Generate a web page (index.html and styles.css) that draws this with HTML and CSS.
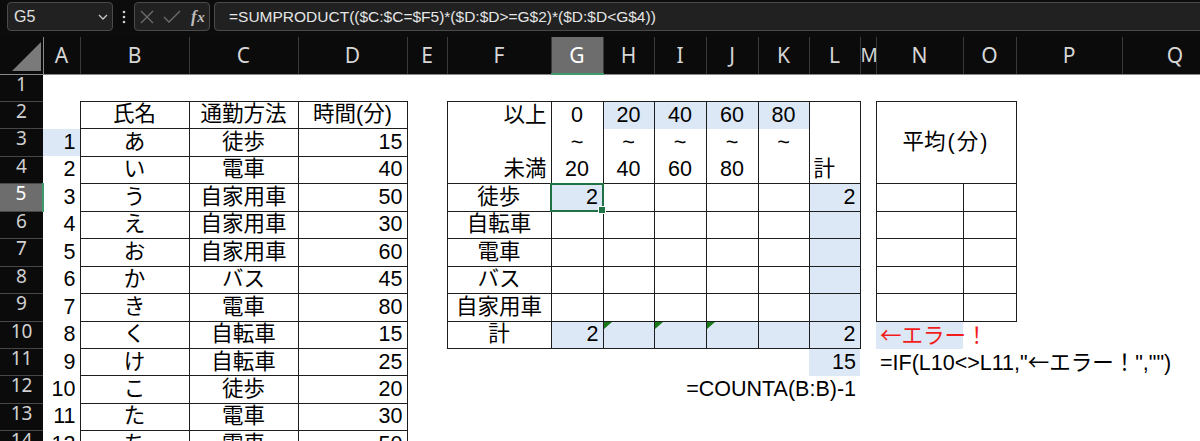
FILE: index.html
```html
<!DOCTYPE html>
<html lang="ja">
<head>
<meta charset="utf-8">
<title>通勤方法の集計</title>
<link rel="stylesheet" href="styles.css">
</head>
<body>
<div class="app">
  <div class="formula-bar">
    <div class="name-box">
      <span>G5</span>
      <svg class="chevron" width="10" height="6" viewBox="0 0 10 6"><path d="M1 1 L5 5 L9 1" fill="none" stroke="#c8c8c8" stroke-width="1.3"/></svg>
    </div>
    <div class="grip">
      <svg width="4" height="14" viewBox="0 0 4 14"><circle cx="2" cy="2" r="1.3" fill="#d0d0d0"/><circle cx="2" cy="7" r="1.3" fill="#d0d0d0"/><circle cx="2" cy="12" r="1.3" fill="#d0d0d0"/></svg>
    </div>
    <div class="fx-box">
      <svg class="ico-cancel" width="14" height="14" viewBox="0 0 14 14"><path d="M1 1 L13 13 M13 1 L1 13" stroke="#6e6e6e" stroke-width="1.3" fill="none"/></svg>
      <svg class="ico-enter" width="18" height="14" viewBox="0 0 18 14"><path d="M1 7 L6 12 L17 1" stroke="#6e6e6e" stroke-width="1.3" fill="none"/></svg>
      <span class="fx">f<i>x</i></span>
    </div>
    <div class="formula">=SUMPRODUCT(($C:$C=$F5)*($D:$D&gt;=G$2)*($D:$D&lt;G$4))</div>
  </div>

  <div class="sheet">
    <table class="grid">
      <colgroup>
        <col class="w-hd"><col class="w-a"><col class="w-b"><col class="w-b"><col class="w-b"><col class="w-e">
        <col class="w-f"><col class="w-n52"><col class="w-n51"><col class="w-n52"><col class="w-n52"><col class="w-n51"><col class="w-n51">
        <col class="w-m"><col class="w-nn"><col class="w-o"><col class="w-p"><col class="w-p">
      </colgroup>
      <thead>
        <tr class="cols">
          <th class="corner"><svg width="30" height="30" viewBox="0 0 30 30"><path d="M29 0 L29 29 L0 29 Z" fill="#7a7a7a"/></svg></th>
          <th>A</th><th>B</th><th>C</th><th>D</th><th>E</th><th>F</th>
          <th class="sel">G</th><th>H</th><th>I</th><th>J</th><th>K</th><th>L</th>
          <th class="narrow">M</th><th>N</th><th>O</th><th>P</th><th>Q</th>
        </tr>
      </thead>
      <tbody>
        <tr>
          <th>1</th><td colspan="17"></td>
        </tr>
        <tr>
          <th>2</th><td></td>
          <td class="box c">氏名</td><td class="box c">通勤方法</td><td class="box c">時間(分)</td>
          <td></td>
          <td class="bt bl br r">以上</td>
          <td class="bt br c">0</td><td class="bt br c hl">20</td><td class="bt br c hl">40</td><td class="bt br c hl">60</td><td class="bt br c hl">80</td>
          <td class="bt br"></td>
          <td></td>
          <td class="box c avg" colspan="2" rowspan="3">平均<span class="paren">(</span>分<span class="paren">)</span></td>
          <td></td><td></td>
        </tr>
        <tr>
          <th>3</th><td class="r hl">1</td>
          <td class="box c">あ</td><td class="box c">徒歩</td><td class="box r">15</td>
          <td></td>
          <td class="bl br"></td>
          <td class="br c">~</td><td class="br c">~</td><td class="br c">~</td><td class="br c">~</td><td class="br c">~</td>
          <td class="br"></td>
          <td></td><td></td><td></td>
        </tr>
        <tr>
          <th>4</th><td class="r">2</td>
          <td class="box c">い</td><td class="box c">電車</td><td class="box r">40</td>
          <td></td>
          <td class="bl br bb r">未満</td>
          <td class="br bb c">20</td><td class="br bb c">40</td><td class="br bb c">60</td><td class="br bb c">80</td><td class="br bb"></td>
          <td class="br bb">計</td>
          <td></td><td></td><td></td>
        </tr>
        <tr>
          <th class="sel">5</th><td class="r">3</td>
          <td class="box c">う</td><td class="box c">自家用車</td><td class="box r">50</td>
          <td></td>
          <td class="box c">徒歩</td>
          <td class="box r hl active">2</td><td class="box"></td><td class="box"></td><td class="box"></td><td class="box"></td>
          <td class="box r hl">2</td>
          <td></td>
          <td class="box"></td><td class="box"></td>
          <td></td><td></td>
        </tr>
        <tr>
          <th>6</th><td class="r">4</td>
          <td class="box c">え</td><td class="box c">自家用車</td><td class="box r">30</td>
          <td></td>
          <td class="box c">自転車</td>
          <td class="box"></td><td class="box"></td><td class="box"></td><td class="box"></td><td class="box"></td>
          <td class="box hl"></td>
          <td></td>
          <td class="box"></td><td class="box"></td>
          <td></td><td></td>
        </tr>
        <tr>
          <th>7</th><td class="r">5</td>
          <td class="box c">お</td><td class="box c">自家用車</td><td class="box r">60</td>
          <td></td>
          <td class="box c">電車</td>
          <td class="box"></td><td class="box"></td><td class="box"></td><td class="box"></td><td class="box"></td>
          <td class="box hl"></td>
          <td></td>
          <td class="box"></td><td class="box"></td>
          <td></td><td></td>
        </tr>
        <tr>
          <th>8</th><td class="r">6</td>
          <td class="box c">か</td><td class="box c">バス</td><td class="box r">45</td>
          <td></td>
          <td class="box c">バス</td>
          <td class="box"></td><td class="box"></td><td class="box"></td><td class="box"></td><td class="box"></td>
          <td class="box hl"></td>
          <td></td>
          <td class="box"></td><td class="box"></td>
          <td></td><td></td>
        </tr>
        <tr>
          <th>9</th><td class="r">7</td>
          <td class="box c">き</td><td class="box c">電車</td><td class="box r">80</td>
          <td></td>
          <td class="box c">自家用車</td>
          <td class="box"></td><td class="box"></td><td class="box"></td><td class="box"></td><td class="box"></td>
          <td class="box hl"></td>
          <td></td>
          <td class="box"></td><td class="box"></td>
          <td></td><td></td>
        </tr>
        <tr>
          <th>10</th><td class="r">8</td>
          <td class="box c">く</td><td class="box c">自転車</td><td class="box r">15</td>
          <td></td>
          <td class="box c">計</td>
          <td class="box r hl">2</td><td class="box hl flag"></td><td class="box hl flag"></td><td class="box hl flag"></td><td class="box hl"></td>
          <td class="box r hl">2</td>
          <td></td>
          <td class="hl err"><span class="cjk">←</span>エラー！</td><td></td>
          <td></td><td></td>
        </tr>
        <tr>
          <th>11</th><td class="r">9</td>
          <td class="box c">け</td><td class="box c">自転車</td><td class="box r">25</td>
          <td></td>
          <td></td><td></td><td></td><td></td><td></td><td></td>
          <td class="r hl">15</td>
          <td></td>
          <td colspan="4">=IF(L10&lt;&gt;L11,"<span class="cjk">←</span>エラー！","")</td>
        </tr>
        <tr>
          <th>12</th><td class="r">10</td>
          <td class="box c">こ</td><td class="box c">徒歩</td><td class="box r">20</td>
          <td></td>
          <td></td>
          <td class="r" colspan="6">=COUNTA(B:B)-1</td>
          <td></td><td></td><td></td><td></td><td></td>
        </tr>
        <tr>
          <th>13</th><td class="r">11</td>
          <td class="box c">た</td><td class="box c">電車</td><td class="box r">30</td>
          <td colspan="13"></td>
        </tr>
        <tr>
          <th>14</th><td class="r">12</td>
          <td class="box c">ち</td><td class="box c">電車</td><td class="box r">50</td>
          <td colspan="13"></td>
        </tr>
      </tbody>
    </table>
  </div>
</div>
</body>
</html>
```

FILE: styles.css
```css
* {
  box-sizing: border-box;
}

html,
body {
  margin: 0;
  background: #ffffff;
  overflow: hidden;
}

body {
  width: 1200px;
  height: 441px;
  font-family: "Liberation Sans", "Noto Sans CJK JP", sans-serif;
}

.app {
  display: flex;
  flex-direction: column;
  width: 1200px;
}

/* ---------- formula bar ---------- */
.formula-bar {
  display: flex;
  align-items: flex-start;
  height: 37px;
  padding: 2px 0 0 7px;
  background: #0c0c0c;
  overflow: hidden;
}

.name-box,
.fx-box,
.formula {
  height: 29px;
  border: 1px solid #4b4b4b;
  border-radius: 4px;
  background: #212121;
  display: flex;
  align-items: center;
}

.name-box {
  width: 106px;
  justify-content: space-between;
  padding: 0 4px 0 6px;
  color: #e2e2e2;
  font-size: 16px;
}

.chevron {
  display: block;
}

.grip {
  width: 21px;
  height: 29px;
  display: flex;
  align-items: center;
  justify-content: center;
}

.fx-box {
  width: 76px;
  padding-left: 5px;
}

.ico-cancel {
  margin-right: 9px;
}

.ico-enter {
  margin-right: 10px;
}

.fx {
  font-family: "Liberation Serif", serif;
  font-style: italic;
  font-weight: bold;
  font-size: 17px;
  color: #bdbdbd;
  letter-spacing: 0.5px;
}

.fx i {
  font-size: 15px;
}

.formula {
  flex: 1;
  margin-left: 4px;
  margin-right: -20px;
  padding-left: 14px;
  color: #e6e6e6;
  font-size: 15.5px;
  white-space: nowrap;
}

/* ---------- sheet grid ---------- */
.sheet {
  width: 1200px;
  overflow: hidden;
}

.grid {
  border-collapse: collapse;
  table-layout: fixed;
  width: 1228px;
}

.w-hd { width: 43px; }
.w-a { width: 37px; }
.w-b { width: 109px; }
.w-e { width: 40px; }
.w-f { width: 104px; }
.w-n52 { width: 52px; }
.w-n51 { width: 51px; }
.w-m { width: 16px; }
.w-nn { width: 87px; }
.w-o { width: 53px; }
.w-p { width: 106px; }

/* column headers */
.cols th {
  height: 37px;
  padding: 0;
  background: #0b0b0b;
  color: #d6d6d6;
  font: 400 21px "Noto Sans", sans-serif;
  text-align: center;
  vertical-align: middle;
  border-right: 1px solid #3a3a3a;
  border-bottom: 1px solid #8a8a8a;
  overflow: hidden;
}

.cols th.narrow {
  font-size: 19px;
}

.cols th.corner {
  text-align: left;
  border-right: 1px solid #8a8a8a;
}

.corner svg {
  display: block;
  margin: 4px 0 0 12px;
}

.cols th.sel {
  background: #6d6d6d;
  color: #ffffff;
  border-bottom: 2px solid #3f9b6b;
}

/* row headers */
tbody tr {
  height: 27.46px;
}

tbody th {
  padding: 0;
  background: #0b0b0b;
  color: #d0d0d0;
  font: 400 19px/18px "Noto Sans", sans-serif;
  text-align: center;
  vertical-align: top;
  border-bottom: 1px solid #474747;
}

tbody th.sel {
  background: #6d6d6d;
  color: #ffffff;
  border-right: 2px solid #3f9b6b;
}

/* cells */
.grid td {
  padding: 0 4px;
  font-size: 21.5px;
  line-height: 1;
  color: #000000;
  white-space: nowrap;
  overflow: visible;
  vertical-align: middle;
  text-align: left;
}

.grid td.c { text-align: center; }
.grid td.r { text-align: right; }

.box { border: 1px solid #1d1d1d; }
.bt { border-top: 1px solid #1d1d1d; }
.bb { border-bottom: 1px solid #1d1d1d; }
.bl { border-left: 1px solid #1d1d1d; }
.br { border-right: 1px solid #1d1d1d; }

.grid td.hl {
  background: #dce8f5;
}

.grid td.err {
  color: #f21c1c;
}

.cjk {
  font-family: "Noto Sans CJK JP", sans-serif;
}

.avg .paren {
  margin: 0 2px;
}

/* active cell with fill handle */
.grid td.active {
  position: relative;
  border: 2px solid #1f7244;
}

.active::after {
  content: "";
  position: absolute;
  right: -4px;
  bottom: -4px;
  width: 6px;
  height: 6px;
  background: #1f7244;
  border: 1px solid #ffffff;
}

/* error indicator in the corner of a cell */
.flag {
  position: relative;
}

.flag::before {
  content: "";
  position: absolute;
  left: 0;
  top: 0;
  border-style: solid;
  border-width: 7px 8px 0 0;
  border-color: #1a7a1a transparent transparent transparent;
}
```
